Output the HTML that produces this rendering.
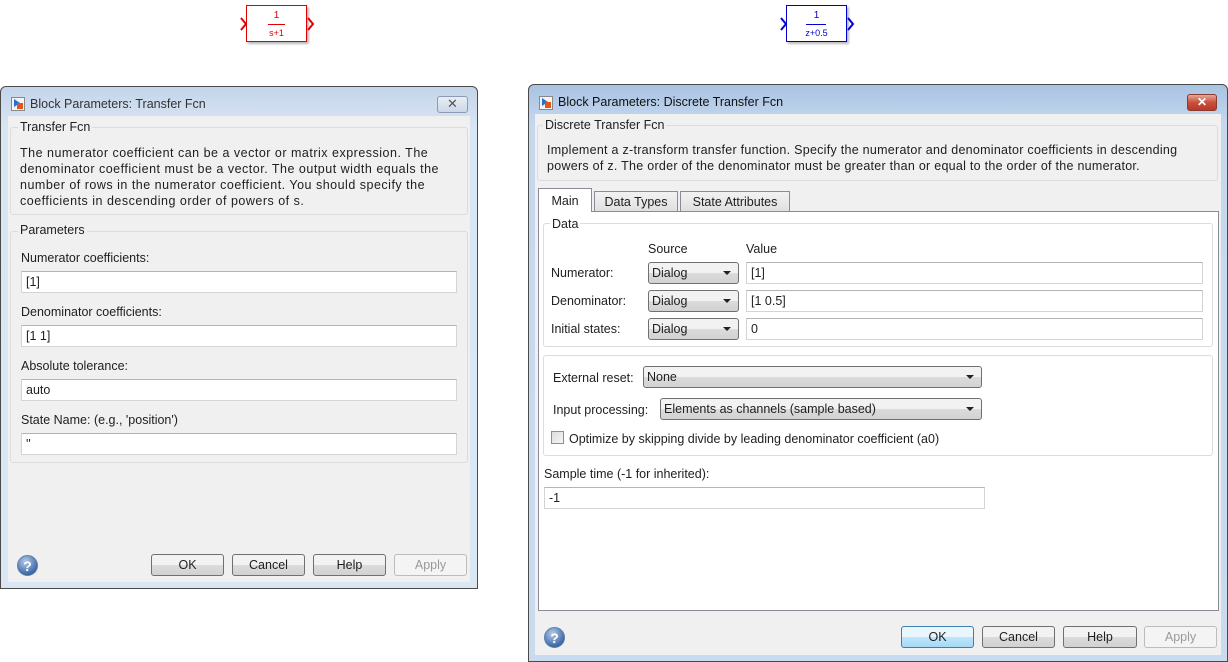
<!DOCTYPE html>
<html><head><meta charset="utf-8"><style>
*{box-sizing:border-box;margin:0;padding:0}
body{width:1228px;height:662px;background:#fff;position:relative;overflow:hidden;font-family:"Liberation Sans",sans-serif;font-size:12.5px;color:#1e1e1e}
.a{position:absolute}
.win{position:absolute;border:1px solid #4a4a4a;border-radius:6px 6px 0 0;background:linear-gradient(#c4d5ea,#d9e5f3 40px,#dbe6f3)}
.client{position:absolute;background:#f0f0f0}
.grp{position:absolute;border:1px solid #dcdcdc;border-radius:3px}
.glbl{position:absolute;background:#f0f0f0;padding:0 2px;line-height:14px}
.inp{position:absolute;background:#fff;border:1px solid #d4d4d4;border-top-color:#b5b5b5;line-height:20px;padding-left:4px}
.btn{position:absolute;height:22px;border:1px solid #707070;border-radius:3px;background:linear-gradient(#f2f2f2 50%,#dcdcdc 50%,#d2d2d2);text-align:center;line-height:20px}
.btn.dis{border-color:#bcbcbc;color:#9a9a9a;background:#f4f4f4}
.dd{position:absolute;height:22px;border:1px solid #707070;border-radius:3px;background:linear-gradient(#f2f2f2 50%,#dcdcdc 50%,#d2d2d2);line-height:21px;padding-left:3px}
.dd:after{content:"";position:absolute;right:7px;top:8px;border-left:4px solid transparent;border-right:4px solid transparent;border-top:4px solid #222}
.help{position:absolute;width:21px;height:21px;border-radius:50%;background:radial-gradient(circle at 40% 30%,#b8cde8,#3f6aa8 70%,#2a4f85);color:#fff;font-weight:bold;font-size:14px;text-align:center;line-height:21px;border:1px solid #5a7fb0}
.ico{position:absolute;width:14px;height:14px;border:1px solid #888;background:#f4f4f4}
.ico:before{content:"";position:absolute;left:2px;top:1px;border-top:4px solid transparent;border-bottom:4px solid transparent;border-left:6px solid #2a6fd0}
.ico:after{content:"";position:absolute;right:1px;bottom:1px;width:6px;height:6px;background:#e0561a}
.chev{position:absolute;width:9px;height:14px}
</style></head><body>

<!-- simulink blocks -->
<div class="a" style="left:246px;top:5px;width:61px;height:37px;border:1px solid #e00000;box-shadow:2px 2px 2px #bbb;background:#fff"></div>
<div class="a" style="left:246px;top:11px;width:61px;text-align:center;color:#e00000;font-size:10px;line-height:10px">1</div>
<div class="a" style="left:268px;top:24px;width:17px;border-top:1px solid #e00000"></div>
<div class="a" style="left:246px;top:28px;width:61px;text-align:center;color:#e00000;font-size:9px;line-height:10px">s+1</div>
<svg class="chev" style="left:240px;top:17px" viewBox="0 0 9 14"><path d="M1 1 L6 7 L1 13" fill="none" stroke="#e00000" stroke-width="2"/></svg>
<svg class="chev" style="left:307px;top:17px" viewBox="0 0 9 14"><path d="M1 1 L6 7 L1 13" fill="none" stroke="#e00000" stroke-width="2"/></svg>

<div class="a" style="left:786px;top:5px;width:61px;height:37px;border:1px solid #0000d0;box-shadow:2px 2px 2px #bbb;background:#fff"></div>
<div class="a" style="left:786px;top:11px;width:61px;text-align:center;color:#0000d0;font-size:10px;line-height:10px">1</div>
<div class="a" style="left:806px;top:24px;width:20px;border-top:1px solid #0000d0"></div>
<div class="a" style="left:786px;top:28px;width:61px;text-align:center;color:#0000d0;font-size:9px;line-height:10px">z+0.5</div>
<svg class="chev" style="left:780px;top:17px" viewBox="0 0 9 14"><path d="M1 1 L6 7 L1 13" fill="none" stroke="#0000d0" stroke-width="2"/></svg>
<svg class="chev" style="left:847px;top:17px" viewBox="0 0 9 14"><path d="M1 1 L6 7 L1 13" fill="none" stroke="#0000d0" stroke-width="2"/></svg>

<!-- LEFT DIALOG -->
<div class="win" style="left:0;top:86px;width:478px;height:503px"></div>
<div class="ico" style="left:11px;top:97px"></div>
<div class="a" style="left:30px;top:97px;color:#333;line-height:15px">Block Parameters: Transfer Fcn</div>
<div class="a" style="left:437px;top:96px;width:31px;height:17px;border:1px solid #8a9bb3;border-radius:3px;background:linear-gradient(#e8eef6,#ccd7e6);text-align:center;line-height:14px;color:#555;font-size:13px">✕</div>
<div class="client" style="left:8px;top:116px;width:462px;height:466px"></div>
<div class="grp" style="left:10px;top:127px;width:458px;height:88px"></div>
<div class="glbl" style="left:18px;top:120px">Transfer Fcn</div>
<div class="a" style="left:20px;top:145px;line-height:16px;white-space:nowrap;letter-spacing:0.5px">The numerator coefficient can be a vector or matrix expression. The<br>denominator coefficient must be a vector. The output width equals the<br>number of rows in the numerator coefficient. You should specify the<br>coefficients in descending order of powers of s.</div>
<div class="grp" style="left:10px;top:231px;width:458px;height:232px"></div>
<div class="glbl" style="left:18px;top:223px">Parameters</div>
<div class="a" style="left:21px;top:251px">Numerator coefficients:</div>
<div class="inp" style="left:21px;top:271px;width:436px;height:22px">[1]</div>
<div class="a" style="left:21px;top:305px">Denominator coefficients:</div>
<div class="inp" style="left:21px;top:325px;width:436px;height:22px">[1 1]</div>
<div class="a" style="left:21px;top:359px">Absolute tolerance:</div>
<div class="inp" style="left:21px;top:379px;width:436px;height:22px">auto</div>
<div class="a" style="left:21px;top:413px">State Name: (e.g., 'position')</div>
<div class="inp" style="left:21px;top:433px;width:436px;height:22px">''</div>
<div class="help" style="left:17px;top:555px">?</div>
<div class="btn" style="left:151px;top:554px;width:73px">OK</div>
<div class="btn" style="left:232px;top:554px;width:73px">Cancel</div>
<div class="btn" style="left:313px;top:554px;width:73px">Help</div>
<div class="btn dis" style="left:394px;top:554px;width:73px">Apply</div>

<!-- RIGHT DIALOG -->
<div class="win" style="left:528px;top:84px;width:700px;height:578px;background:linear-gradient(#a9c3e2,#c5d8ee 40px,#c9dbef)"></div>
<div class="ico" style="left:539px;top:96px"></div>
<div class="a" style="left:558px;top:95px;color:#111;line-height:15px">Block Parameters: Discrete Transfer Fcn</div>
<div class="a" style="left:1187px;top:94px;width:30px;height:17px;border:1px solid #8a3a30;border-radius:3px;background:linear-gradient(#e8a898,#c7503c 50%,#b83a28);text-align:center;line-height:15px;color:#fff;font-size:12px;font-weight:bold">✕</div>
<div class="client" style="left:535px;top:114px;width:686px;height:541px"></div>
<div class="grp" style="left:537px;top:125px;width:681px;height:56px"></div>
<div class="glbl" style="left:543px;top:118px">Discrete Transfer Fcn</div>
<div class="a" style="left:547px;top:142px;line-height:16px;white-space:nowrap;letter-spacing:0.27px">Implement a z-transform transfer function. Specify the numerator and denominator coefficients in descending<br>powers of z. The order of the denominator must be greater than or equal to the order of the numerator.</div>

<div class="a" style="left:538px;top:211px;width:681px;height:400px;background:#fff;border:1px solid #898c95"></div>
<div class="a" style="left:594px;top:191px;width:84px;height:21px;border:1px solid #898c95;background:linear-gradient(#f2f2f2,#e0e0e0);text-align:center;line-height:20px">Data Types</div>
<div class="a" style="left:680px;top:191px;width:110px;height:21px;border:1px solid #898c95;background:linear-gradient(#f2f2f2,#e0e0e0);text-align:center;line-height:20px">State Attributes</div>
<div class="a" style="left:538px;top:188px;width:54px;height:24px;border:1px solid #898c95;border-bottom:none;background:#fff;text-align:center;line-height:24px">Main</div>

<div class="grp" style="left:543px;top:223px;width:670px;height:124px;background:#fff"></div>
<div class="a" style="left:550px;top:217px;background:#fff;padding:0 2px;line-height:14px">Data</div>
<div class="a" style="left:648px;top:242px">Source</div>
<div class="a" style="left:746px;top:242px">Value</div>
<div class="a" style="left:551px;top:266px">Numerator:</div>
<div class="a" style="left:551px;top:294px">Denominator:</div>
<div class="a" style="left:551px;top:322px">Initial states:</div>
<div class="dd" style="left:648px;top:262px;width:91px">Dialog</div>
<div class="dd" style="left:648px;top:290px;width:91px">Dialog</div>
<div class="dd" style="left:648px;top:318px;width:91px">Dialog</div>
<div class="inp" style="left:746px;top:262px;width:457px;height:22px">[1]</div>
<div class="inp" style="left:746px;top:290px;width:457px;height:22px">[1 0.5]</div>
<div class="inp" style="left:746px;top:318px;width:457px;height:22px">0</div>

<div class="grp" style="left:543px;top:355px;width:670px;height:101px"></div>
<div class="a" style="left:553px;top:371px">External reset:</div>
<div class="dd" style="left:643px;top:366px;width:339px">None</div>
<div class="a" style="left:553px;top:403px">Input processing:</div>
<div class="dd" style="left:660px;top:398px;width:322px">Elements as channels (sample based)</div>
<div class="a" style="left:551px;top:431px;width:13px;height:13px;border:1px solid #8f8f8f;background:linear-gradient(135deg,#ddd,#f6f6f6)"></div>
<div class="a" style="left:569px;top:432px">Optimize by skipping divide by leading denominator coefficient (a0)</div>
<div class="a" style="left:544px;top:467px">Sample time (-1 for inherited):</div>
<div class="inp" style="left:544px;top:487px;width:441px;height:22px">-1</div>

<div class="help" style="left:544px;top:627px">?</div>
<div class="btn" style="left:901px;top:626px;width:73px;border-color:#3c7fb1;background:linear-gradient(#eaf6fd 50%,#bee6fd 50%,#a7d9f5)">OK</div>
<div class="btn" style="left:982px;top:626px;width:73px">Cancel</div>
<div class="btn" style="left:1063px;top:626px;width:74px">Help</div>
<div class="btn dis" style="left:1144px;top:626px;width:73px">Apply</div>
</body></html>
